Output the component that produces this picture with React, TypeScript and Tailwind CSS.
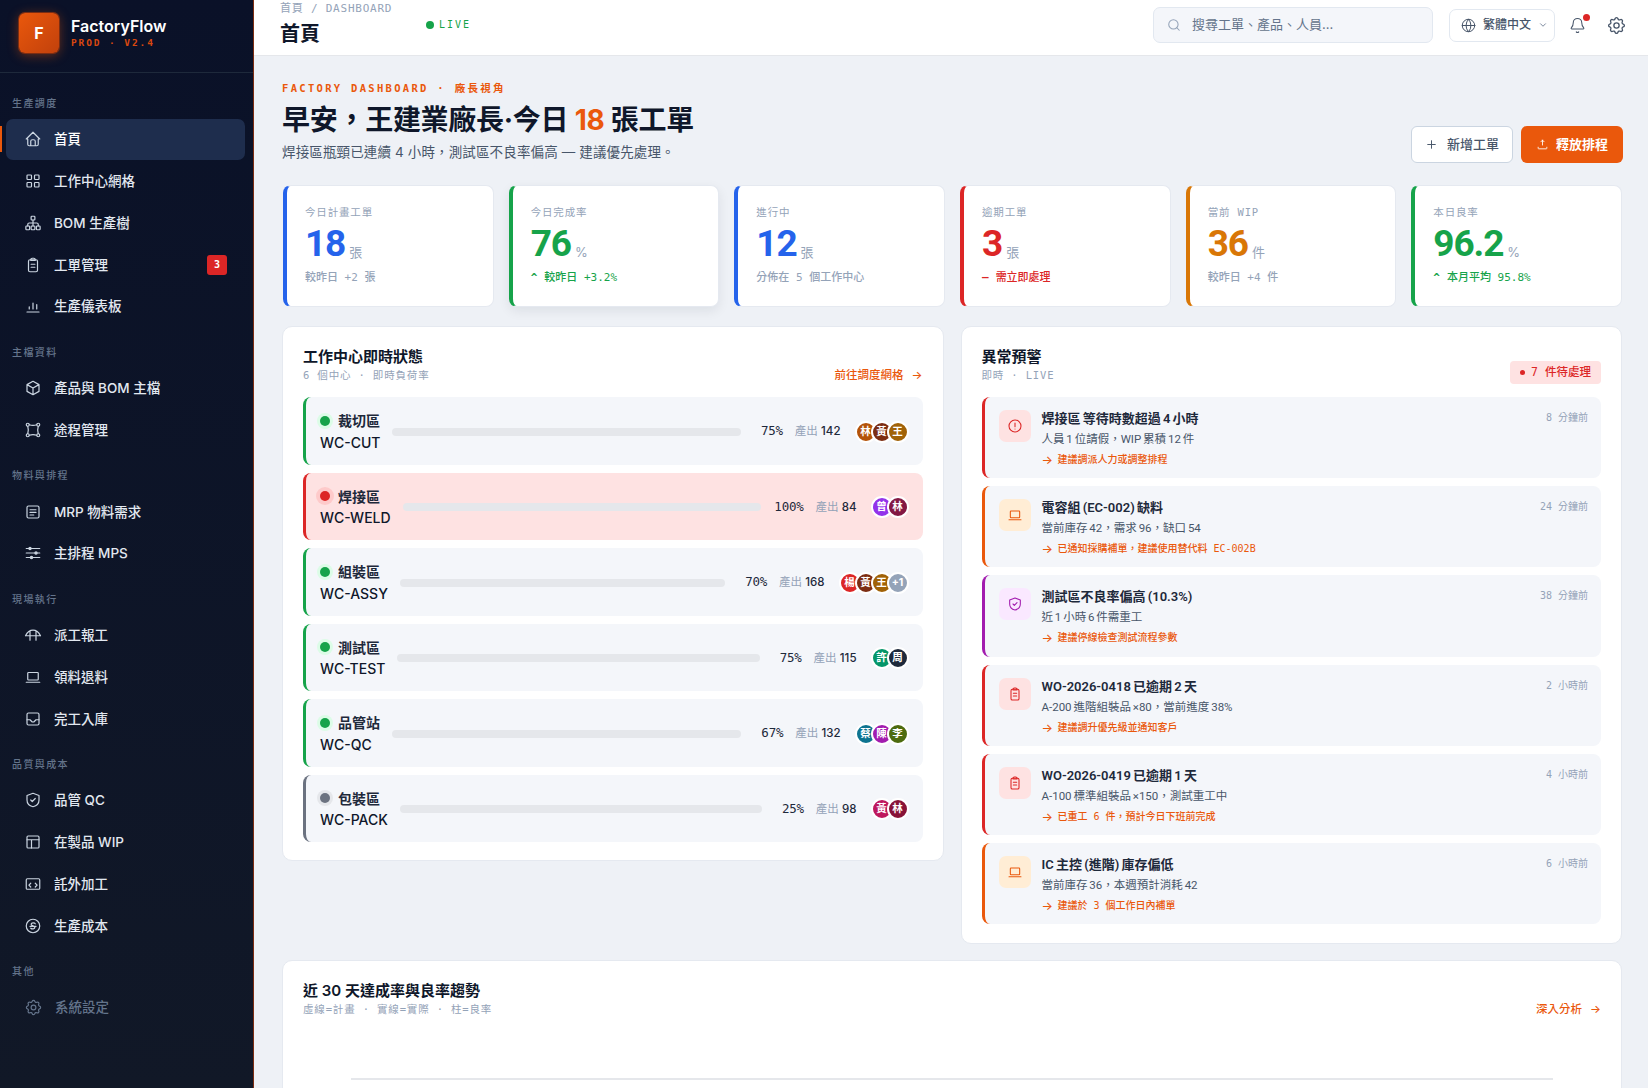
import React from 'react';
import { Bell, ChevronDown, Globe, Plus, Search } from 'lucide-react';
import { TbSettings } from 'react-icons/tb';

const sans = "font-['Inter','Noto_Sans_CJK_TC',sans-serif]";
const mono = "font-['DejaVu_Sans_Mono','Noto_Sans_CJK_TC',monospace]";
const din = "font-['Roboto','Noto_Sans_CJK_TC',sans-serif]";

function Ic({ children, className = 'w-[18px] h-[18px]' }: { children: React.ReactNode; className?: string }) {
  return (
    <svg viewBox="0 0 24 24" fill="none" stroke="currentColor" strokeWidth={1.6} strokeLinecap="round" strokeLinejoin="round" className={`shrink-0 ${className}`}>
      {children}
    </svg>
  );
}

const paths: Record<string, React.ReactNode> = {
  home: <path d="M5 12H3l9-9 9 9h-2M5 12v7a2 2 0 0 0 2 2h10a2 2 0 0 0 2-2v-7M9 21v-6a2 2 0 0 1 2-2h2a2 2 0 0 1 2 2v6" />,
  grid: <><rect x="4" y="4" width="6" height="6" rx="1" /><rect x="14" y="4" width="6" height="6" rx="1" /><rect x="4" y="14" width="6" height="6" rx="1" /><rect x="14" y="14" width="6" height="6" rx="1" /></>,
  tree: <><rect x="9.5" y="3" width="5" height="5" rx="1" /><rect x="2.5" y="16" width="5" height="5" rx="1" /><rect x="9.5" y="16" width="5" height="5" rx="1" /><rect x="16.5" y="16" width="5" height="5" rx="1" /><path d="M12 8v8M5 16v-2a2 2 0 0 1 2-2h10a2 2 0 0 1 2 2v2" /></>,
  clip: <><rect x="6" y="5" width="12" height="16" rx="2" /><path d="M9 5a2 2 0 0 1 2-2h2a2 2 0 0 1 2 2v1H9zM9.5 11h5M9.5 15h5" /></>,
  chart: <path d="M4 20h16M7 16v-3M12 16V8M17 16v-6" />,
  box: <path d="M12 3l8 4.5v9L12 21l-8-4.5v-9L12 3zM12 12l8-4.5M12 12v9M12 12L4 7.5" />,
  route: <><circle cx="5" cy="5" r="2" /><circle cx="19" cy="5" r="2" /><circle cx="5" cy="19" r="2" /><circle cx="19" cy="19" r="2" /><path d="M7 5q5 1.5 10 0M5 7q1.5 5 0 10M19 7q-1.5 5 0 10M7 19q5-1.5 10 0" /></>,
  doc: <><rect x="4" y="4" width="16" height="16" rx="2" /><path d="M8 9h8M8 12.5h8M8 16h5" /></>,
  sliders: <><path d="M3 6h18M3 12h18M3 18h18" /><circle cx="8" cy="6" r="1.5" fill="currentColor" /><circle cx="16" cy="12" r="1.5" fill="currentColor" /><circle cx="10" cy="18" r="1.5" fill="currentColor" /></>,
  gate: <path d="M2 13c2.5-5 6.5-7.500 10-7.500S19.500 8 22 13M2 13h20M8 6.500V19M16 6.500V19" />,
  laptop: <path d="M3 19h18M5 7a1 1 0 0 1 1-1h12a1 1 0 0 1 1 1v8a1 1 0 0 1-1 1H6a1 1 0 0 1-1-1z" />,
  inbox: <><rect x="4" y="4" width="16" height="16" rx="2" /><path d="M4 13h4l3 3h2l3-3h4" /></>,
  shield: <path d="M12 3l8 3v6c0 5-3.500 8-8 9-4.500-1-8-4-8-9V6l8-3zM9 12l2 2 4-4" />,
  layout: <><rect x="4" y="4" width="16" height="16" rx="1.5" /><path d="M4 9h16M10 9v11" /></>,
  code: <><rect x="3" y="5" width="18" height="14" rx="1.5" /><path d="M9 11l-2.500 2.500L9 16M15 11l2.500 2.500L15 16" /></>,
  coin: <><circle cx="12" cy="12" r="9" /><path d="M15 9c-1-1.500-5-1.500-5.500.5-.5 2 5 2.500 5 4.500s-4 2.500-5.500 1M8 12.500h8" /></>,
  alert: <><circle cx="12" cy="12" r="9" /><path d="M12 7.500v5.500M12 16.500v.01" /></>,
};

type NavItem = { label: string; icon: string; active?: boolean; badge?: string; muted?: boolean };
const nav: { title: string; items: NavItem[] }[] = [
  {
    title: '生產調度',
    items: [
      { label: '首頁', icon: 'home', active: true },
      { label: '工作中心網格', icon: 'grid' },
      { label: 'BOM 生產樹', icon: 'tree' },
      { label: '工單管理', icon: 'clip', badge: '3' },
      { label: '生產儀表板', icon: 'chart' },
    ],
  },
  { title: '主檔資料', items: [{ label: '產品與 BOM 主檔', icon: 'box' }, { label: '途程管理', icon: 'route' }] },
  { title: '物料與排程', items: [{ label: 'MRP 物料需求', icon: 'doc' }, { label: '主排程 MPS', icon: 'sliders' }] },
  { title: '現場執行', items: [{ label: '派工報工', icon: 'gate' }, { label: '領料退料', icon: 'laptop' }, { label: '完工入庫', icon: 'inbox' }] },
  {
    title: '品質與成本',
    items: [
      { label: '品管 QC', icon: 'shield' },
      { label: '在製品 WIP', icon: 'layout' },
      { label: '託外加工', icon: 'code' },
      { label: '生產成本', icon: 'coin' },
    ],
  },
  { title: '其他', items: [{ label: '系統設定', icon: 'gear', muted: true }] },
];

const kpis = [
  { label: '今日計畫工單', value: '18', unit: '張', foot: '較昨日 +2 張', border: 'border-l-[#2563eb]', color: 'text-[#2563eb]', footColor: 'text-[#94a3b8]' },
  { label: '今日完成率', value: '76', unit: '%', foot: '較昨日 +3.2%', border: 'border-l-[#16a34a]', color: 'text-[#16a34a]', footColor: 'text-[#16a34a]', mark: '^', shadow: true },
  { label: '進行中', value: '12', unit: '張', foot: '分佈在 5 個工作中心', border: 'border-l-[#2563eb]', color: 'text-[#2563eb]', footColor: 'text-[#94a3b8]' },
  { label: '逾期工單', value: '3', unit: '張', foot: '需立即處理', border: 'border-l-[#dc2626]', color: 'text-[#dc2626]', footColor: 'text-[#dc2626]', mark: '–' },
  { label: '當前 WIP', value: '36', unit: '件', foot: '較昨日 +4 件', border: 'border-l-[#d97706]', color: 'text-[#d97706]', footColor: 'text-[#94a3b8]' },
  { label: '本日良率', value: '96.2', unit: '%', foot: '本月平均 95.8%', border: 'border-l-[#16a34a]', color: 'text-[#16a34a]', footColor: 'text-[#16a34a]', mark: '^' },
];

const centers = [
  { name: '裁切區', code: 'WC-CUT', pct: '75%', out: '142', tone: 'green', people: [['林', 'bg-[#b45309]'], ['黃', 'bg-[#7c2d12]'], ['王', 'bg-[#a16207]']] },
  { name: '焊接區', code: 'WC-WELD', pct: '100%', out: '84', tone: 'red', people: [['曾', 'bg-[#9333ea]'], ['林', 'bg-[#831843]']] },
  { name: '組裝區', code: 'WC-ASSY', pct: '70%', out: '168', tone: 'green', people: [['楊', 'bg-[#dc2626]'], ['黃', 'bg-[#7c2d12]'], ['王', 'bg-[#a16207]'], ['+1', 'bg-[#94a3b8]']] },
  { name: '測試區', code: 'WC-TEST', pct: '75%', out: '115', tone: 'green', people: [['許', 'bg-[#059669]'], ['周', 'bg-[#1e293b]']] },
  { name: '品管站', code: 'WC-QC', pct: '67%', out: '132', tone: 'green', people: [['蔡', 'bg-[#0e7490]'], ['陳', 'bg-[#a21caf]'], ['李', 'bg-[#4d6b0f]']] },
  { name: '包裝區', code: 'WC-PACK', pct: '25%', out: '98', tone: 'gray', people: [['黃', 'bg-[#be185d]'], ['林', 'bg-[#881337]']] },
];

const alerts = [
  { title: '焊接區 等待時數超過 4 小時', sub: '人員 1 位請假，WIP 累積 12 件', act: '建議調派人力或調整排程', time: '8 分鐘前', icon: 'alert', border: 'border-l-[#dc2626]', box: 'bg-[#fee2e2] text-[#dc2626]' },
  { title: '電容組 (EC-002) 缺料', sub: '當前庫存 42，需求 96，缺口 54', act: '已通知採購補單，建議使用替代料 EC-002B', time: '24 分鐘前', icon: 'laptop', border: 'border-l-[#ea580c]', box: 'bg-[#ffedd5] text-[#ea580c]' },
  { title: '測試區不良率偏高 (10.3%)', sub: '近 1 小時 6 件需重工', act: '建議停線檢查測試流程參數', time: '38 分鐘前', icon: 'shield', border: 'border-l-[#a21caf]', box: 'bg-[#fae8ff] text-[#a21caf]' },
  { title: 'WO-2026-0418 已逾期 2 天', sub: 'A-200 進階組裝品 ×80，當前進度 38%', act: '建議調升優先級並通知客戶', time: '2 小時前', icon: 'clip', border: 'border-l-[#dc2626]', box: 'bg-[#fee2e2] text-[#dc2626]' },
  { title: 'WO-2026-0419 已逾期 1 天', sub: 'A-100 標準組裝品 ×150，測試重工中', act: '已重工 6 件，預計今日下班前完成', time: '4 小時前', icon: 'clip', border: 'border-l-[#dc2626]', box: 'bg-[#fee2e2] text-[#dc2626]' },
  { title: 'IC 主控 (進階) 庫存偏低', sub: '當前庫存 36，本週預計消耗 42', act: '建議於 3 個工作日內補單', time: '6 小時前', icon: 'laptop', border: 'border-l-[#ea580c]', box: 'bg-[#ffedd5] text-[#ea580c]' },
];

const tones: Record<string, { row: string; dot: string }> = {
  green: { row: 'bg-[#f4f6fa] border-l-[#16a34a]', dot: 'bg-[#16a34a] shadow-[0_0_0_3px_#dcfce7]' },
  red: { row: 'bg-[#fee2e2] border-l-[#dc2626]', dot: 'bg-[#dc2626] shadow-[0_0_0_4px_#fecaca]' },
  gray: { row: 'bg-[#f4f6fa] border-l-[#6b7280]', dot: 'bg-[#6b7280] shadow-[0_0_0_3px_#e5e7eb]' },
};

function Sidebar() {
  return (
    <aside className="w-[254px] shrink-0 h-full flex flex-col bg-gradient-to-b from-[#0a1128] to-[#111827] border-r border-r-[#7c2d12]">
      <div className="h-[73px] shrink-0 flex items-start gap-[12px] pl-[19px] pt-[13px] border-b border-b-[#1e293b]">
        <div className="w-[40px] h-[40px] rounded-[6px] flex items-center justify-center bg-gradient-to-br from-[#ea580c] to-[#c2410c] text-white text-[16px] font-bold shadow-[0_0_0_1px_#7c2d12,0_2px_12px_rgba(234,88,12,0.45)]">
          F
        </div>
        <div className="flex flex-col pt-[3px]">
          <span className="text-[16px] leading-[20px] font-semibold text-white">FactoryFlow</span>
          <span className={`${mono} text-[9.500px] leading-[14px] tracking-[0.2em] font-semibold text-[#d9480f]`}>PROD · V2.4</span>
        </div>
      </div>
      <nav className="pt-[23px] flex flex-col gap-[18px]">
        {nav.map((group) => (
          <div key={group.title}>
            <div className="h-[14px] mb-[9px] pl-[12px] text-[10px] leading-[14px] tracking-[0.14em] font-medium text-[#64748b]">{group.title}</div>
            <div className="flex flex-col gap-px">
              {group.items.map((item) => (
                <SideLink key={item.label} item={item} />
              ))}
            </div>
          </div>
        ))}
      </nav>
    </aside>
  );
}

function SideLink({ item }: { item: NavItem }) {
  return (
    <div className="relative h-[40.750px] ml-[6px] mr-[8px] px-[18px] flex items-center gap-[12px]">
      {item.active && <span className="absolute left-[-6px] top-[7px] w-[2px] h-[26px] bg-[#ea580c]" />}
      {item.active && <span className="absolute inset-0 rounded-[7px] bg-[#1e2d4d]" />}
      <span className={`relative ${item.muted ? 'text-[#64748b]' : 'text-[#cbd5e1]'}`}>
        {item.icon === 'gear' ? <TbSettings className="w-[19px] h-[19px]" strokeWidth={1.5} /> : <Ic>{paths[item.icon]}</Ic>}
      </span>
      <span className={`relative text-[13.500px] font-medium ${item.active ? 'text-white' : item.muted ? 'text-[#64748b]' : 'text-[#e2e8f0]'}`}>{item.label}</span>
      {item.badge && (
        <span className={`${mono} relative ml-auto w-[20px] h-[20px] rounded-[3px] bg-[#dc2626] text-white text-[10px] font-bold flex items-center justify-center`}>{item.badge}</span>
      )}
    </div>
  );
}

function TopBar() {
  return (
    <header className="h-[56px] shrink-0 bg-white border-b border-b-[#e5e7eb] flex items-center pl-[26px] pr-[21px] pb-[5px]">
      <div className="w-[146px]">
        <div className={`${mono} text-[11px] leading-[14px] tracking-[0.07em] text-[#94a3b8]`}>首頁 / DASHBOARD</div>
        <div className="mt-[4px] text-[20px] leading-[28px] font-bold text-[#0f172a]">首頁</div>
      </div>
      <div className="flex items-center gap-[5px] mb-[1px]">
        <span className="w-[8px] h-[8px] rounded-full bg-[#16a34a]" />
        <span className={`${mono} text-[10px] tracking-[0.2em] font-medium text-[#16a34a]`}>LIVE</span>
      </div>
      <div className="ml-auto w-[280px] h-[36px] rounded-[7px] bg-[#f4f6fa] border border-[#e2e8f0] flex items-center gap-[11px] pl-[13px]">
        <Search className="w-[14px] h-[14px] text-[#94a3b8]" strokeWidth={1.8} />
        <span className="text-[13px] text-[#64748b]">搜尋工單、產品、人員...</span>
      </div>
      <div className="ml-[16px] w-[106px] h-[33px] rounded-[7px] bg-white border border-[#e2e8f0] flex items-center pl-[11px] gap-[7px]">
        <Globe className="w-[15px] h-[15px] text-[#475569]" strokeWidth={1.6} />
        <span className="text-[12px] font-medium text-[#475569]">繁體中文</span>
        <ChevronDown className="w-[10px] h-[10px] text-[#64748b]" />
      </div>
      <div className="relative ml-[14px] w-[18px]">
        <Bell className="w-[17px] h-[17px] text-[#475569]" strokeWidth={1.5} />
        <span className="absolute right-[-3px] top-[-3px] w-[7px] h-[7px] rounded-full bg-[#dc2626]" />
      </div>
      <TbSettings className="ml-[19px] w-[21px] h-[21px] text-[#475569]" strokeWidth={1.5} />
    </header>
  );
}

function Hero() {
  return (
    <div className="-ml-px -mr-px flex items-end justify-between mb-[23px]">
      <div>
        <div className={`${mono} h-[16px] text-[10.500px] leading-[16px] tracking-[0.22em] font-semibold text-[#ea580c]`}>FACTORY DASHBOARD · 廠長視角</div>
        <h1 className="mt-[6px] text-[28px] leading-[36px] font-bold tracking-[-0.01em] text-[#0f172a]">
          早安，王建業廠長·今日 <span className="text-[#ea580c]">18</span> 張工單
        </h1>
        <p className="mt-[4px] text-[13.500px] leading-[20px] tracking-[0.01em] text-[#475569]">焊接區瓶頸已連續 4 小時，測試區不良率偏高 — 建議優先處理。</p>
      </div>
      <div className="flex gap-[8px] -mb-px">
        <button className="w-[102px] h-[37px] rounded-[6px] bg-white border border-[#cbd5e1] flex items-center justify-center gap-[9px] text-[13px] font-medium text-[#475569]">
          <Plus className="w-[13px] h-[13px]" strokeWidth={1.8} />
          新增工單
        </button>
        <button className="w-[102px] h-[37px] rounded-[6px] bg-[#ea580c] flex items-center justify-center gap-[7px] text-[13px] font-semibold text-white">
          <Ic className="w-[13px] h-[13px]">
            <path d="M4 17v2a1 1 0 0 0 1 1h14a1 1 0 0 0 1-1v-2M12 4l-3 3M12 4l3 3M12 4v9" />
          </Ic>
          釋放排程
        </button>
      </div>
    </div>
  );
}

function KpiRow() {
  return (
    <div className="grid grid-cols-6 gap-[15px] mb-[19px]">
      {kpis.map((k) => (
        <div key={k.label} className={`h-[122px] rounded-[8px] bg-white border border-[#e5e9f0] border-l-[4px] ${k.border} pl-[18px] pt-[19px] ${k.shadow ? 'shadow-[0_4px_12px_rgba(15,23,42,0.08)]' : ''}`}>
          <div className={`${mono} text-[10.500px] leading-[14px] tracking-[0.08em] text-[#94a3b8]`}>{k.label}</div>
          <div className="mt-[5px] h-[40px] flex items-end gap-[4px]">
            <span className={`${din} text-[37px] leading-[40px] font-bold tracking-[-0.03em] ${k.color}`}>{k.value}</span>
            <span className="text-[13px] leading-[18px] mb-[3px] text-[#94a3b8]">{k.unit}</span>
          </div>
          <div className={`${mono} mt-[7px] flex items-center gap-[7px] text-[11px] leading-[14px] font-medium ${k.footColor}`}>
            {k.mark && <span className="font-bold">{k.mark}</span>}
            <span>{k.foot}</span>
          </div>
        </div>
      ))}
    </div>
  );
}

function PanelHead({ title, sub, right }: { title: string; sub: string; right: React.ReactNode }) {
  return (
    <div className="flex items-start justify-between h-[51px]">
      <div>
        <div className="text-[15px] leading-[22px] font-semibold text-[#0f172a]">{title}</div>
        <div className={`${mono} text-[10.500px] leading-[14px] tracking-[0.08em] text-[#94a3b8]`}>{sub}</div>
      </div>
      {right}
    </div>
  );
}

function LinkArrow({ text }: { text: string }) {
  return (
    <span className="mt-[22px] flex items-center gap-[8px] text-[11.500px] leading-[14px] font-medium text-[#ea580c]">
      {text}
      <span>→</span>
    </span>
  );
}

function CenterRow({ c }: { c: (typeof centers)[number] }) {
  const tone = tones[c.tone];
  return (
    <div className={`h-[67.500px] rounded-[8px] border-l-[3px] ${tone.row} pl-[14px] pr-[14px] pt-[2px] flex items-center`}>
      <div className="shrink-0">
        <div className="flex items-center gap-[8px] h-[22px]">
          <span className={`w-[10px] h-[10px] rounded-full ${tone.dot}`} />
          <span className="text-[14px] font-semibold text-[#1e293b]">{c.name}</span>
        </div>
        <div className="h-[22px] text-[14px] leading-[22px] font-medium text-[#0f172a]">{c.code}</div>
      </div>
      <div className="flex-1 ml-[12px] h-[8px] rounded-full bg-[#e5e7eb]" />
      <div className={`${mono} w-[36px] ml-[6px] text-right text-[12.500px] tracking-[-0.02em] font-medium text-[#1e293b]`}>{c.pct}</div>
      <div className="ml-[12px] text-[11.500px] text-[#94a3b8]">
        產出 <span className="font-medium text-[#1e293b]">{c.out}</span>
      </div>
      <div className="ml-[14px] flex">
        {c.people.map(([n, bg]) => (
          <span key={n} className={`w-[22px] h-[22px] -ml-[6px] first:ml-0 rounded-full border-2 border-white ${bg} text-white text-[10.500px] font-bold flex items-center justify-center`}>{n}</span>
        ))}
      </div>
    </div>
  );
}

function AlertRow({ a }: { a: (typeof alerts)[number] }) {
  return (
    <div className={`${din} h-[81.200px] rounded-[8px] border-l-[3px] ${a.border} bg-[#f4f6fa] pl-[14px] pr-[13px] pt-[13px] flex gap-[11px]`}>
      <div className={`w-[32px] h-[32px] shrink-0 rounded-[7px] flex items-center justify-center ${a.box}`}>
        <Ic className="w-[16px] h-[16px]">{paths[a.icon]}</Ic>
      </div>
      <div className="flex-1">
        <div className="text-[13px] leading-[18px] font-semibold [word-spacing:-1px] text-[#1e293b]">{a.title}</div>
        <div className="mt-[3px] text-[11.500px] leading-[17px] [word-spacing:-1px] text-[#475569]">{a.sub}</div>
        <div className={`${mono} mt-[4px] flex text-[10px] leading-[16px] font-medium text-[#ea580c]`}>
          <span className={`${sans} w-[16px] text-[12px]`}>→</span>
          {a.act}
        </div>
      </div>
      <div className={`${mono} mt-[1px] text-[10px] leading-[14px] text-[#94a3b8]`}>{a.time}</div>
    </div>
  );
}

export default function App() {
  return (
    <div className={`${sans} w-full h-screen overflow-hidden flex bg-[#eef1f6]`}>
      <Sidebar />
      <div className="flex-1 min-w-0 h-full flex flex-col overflow-hidden">
        <TopBar />
        <main className="flex-1 overflow-hidden pl-[29px] pr-[26px] pt-[24px]">
          <Hero />
          <KpiRow />
          <div className="-ml-px grid grid-cols-2 gap-[17px] items-start mb-[16px]">
            <section className="rounded-[10px] bg-white border border-[#e5e9f0] px-[20px] pt-[19px] pb-[18px]">
              <PanelHead title="工作中心即時狀態" sub="6 個中心 · 即時負荷率" right={<LinkArrow text="前往調度網格" />} />
              <div className="flex flex-col gap-[8px]">
                {centers.map((c) => (
                  <CenterRow key={c.code} c={c} />
                ))}
              </div>
            </section>
            <section className="rounded-[10px] bg-white border border-[#e5e9f0] px-[20px] pt-[19px] pb-[19px]">
              <PanelHead
                title="異常預警"
                sub="即時 · LIVE"
                right={
                  <span className={`${mono} mt-[15px] h-[23px] w-[91px] rounded-[4px] bg-[#fee2e2] text-[#dc2626] text-[11.500px] font-medium flex items-center justify-center gap-[6px]`}>
                    <span className="w-[5px] h-[5px] rounded-full bg-[#dc2626]" />7 件待處理
                  </span>
                }
              />
              <div className="flex flex-col gap-[8px]">
                {alerts.map((a) => (
                  <AlertRow key={a.title} a={a} />
                ))}
              </div>
            </section>
          </div>
          <section className="-ml-px rounded-t-[10px] bg-white border border-[#e5e9f0] px-[20px] pt-[19px]">
            <PanelHead title="近 30 天達成率與良率趨勢" sub="虛線=計畫 · 實線=實際 · 柱=良率" right={<LinkArrow text="深入分析" />} />
            <div className="mx-[48px] mt-[47px] h-[40px] border-t-2 border-t-[#e5e7eb]" />
          </section>
        </main>
      </div>
    </div>
  );
}
